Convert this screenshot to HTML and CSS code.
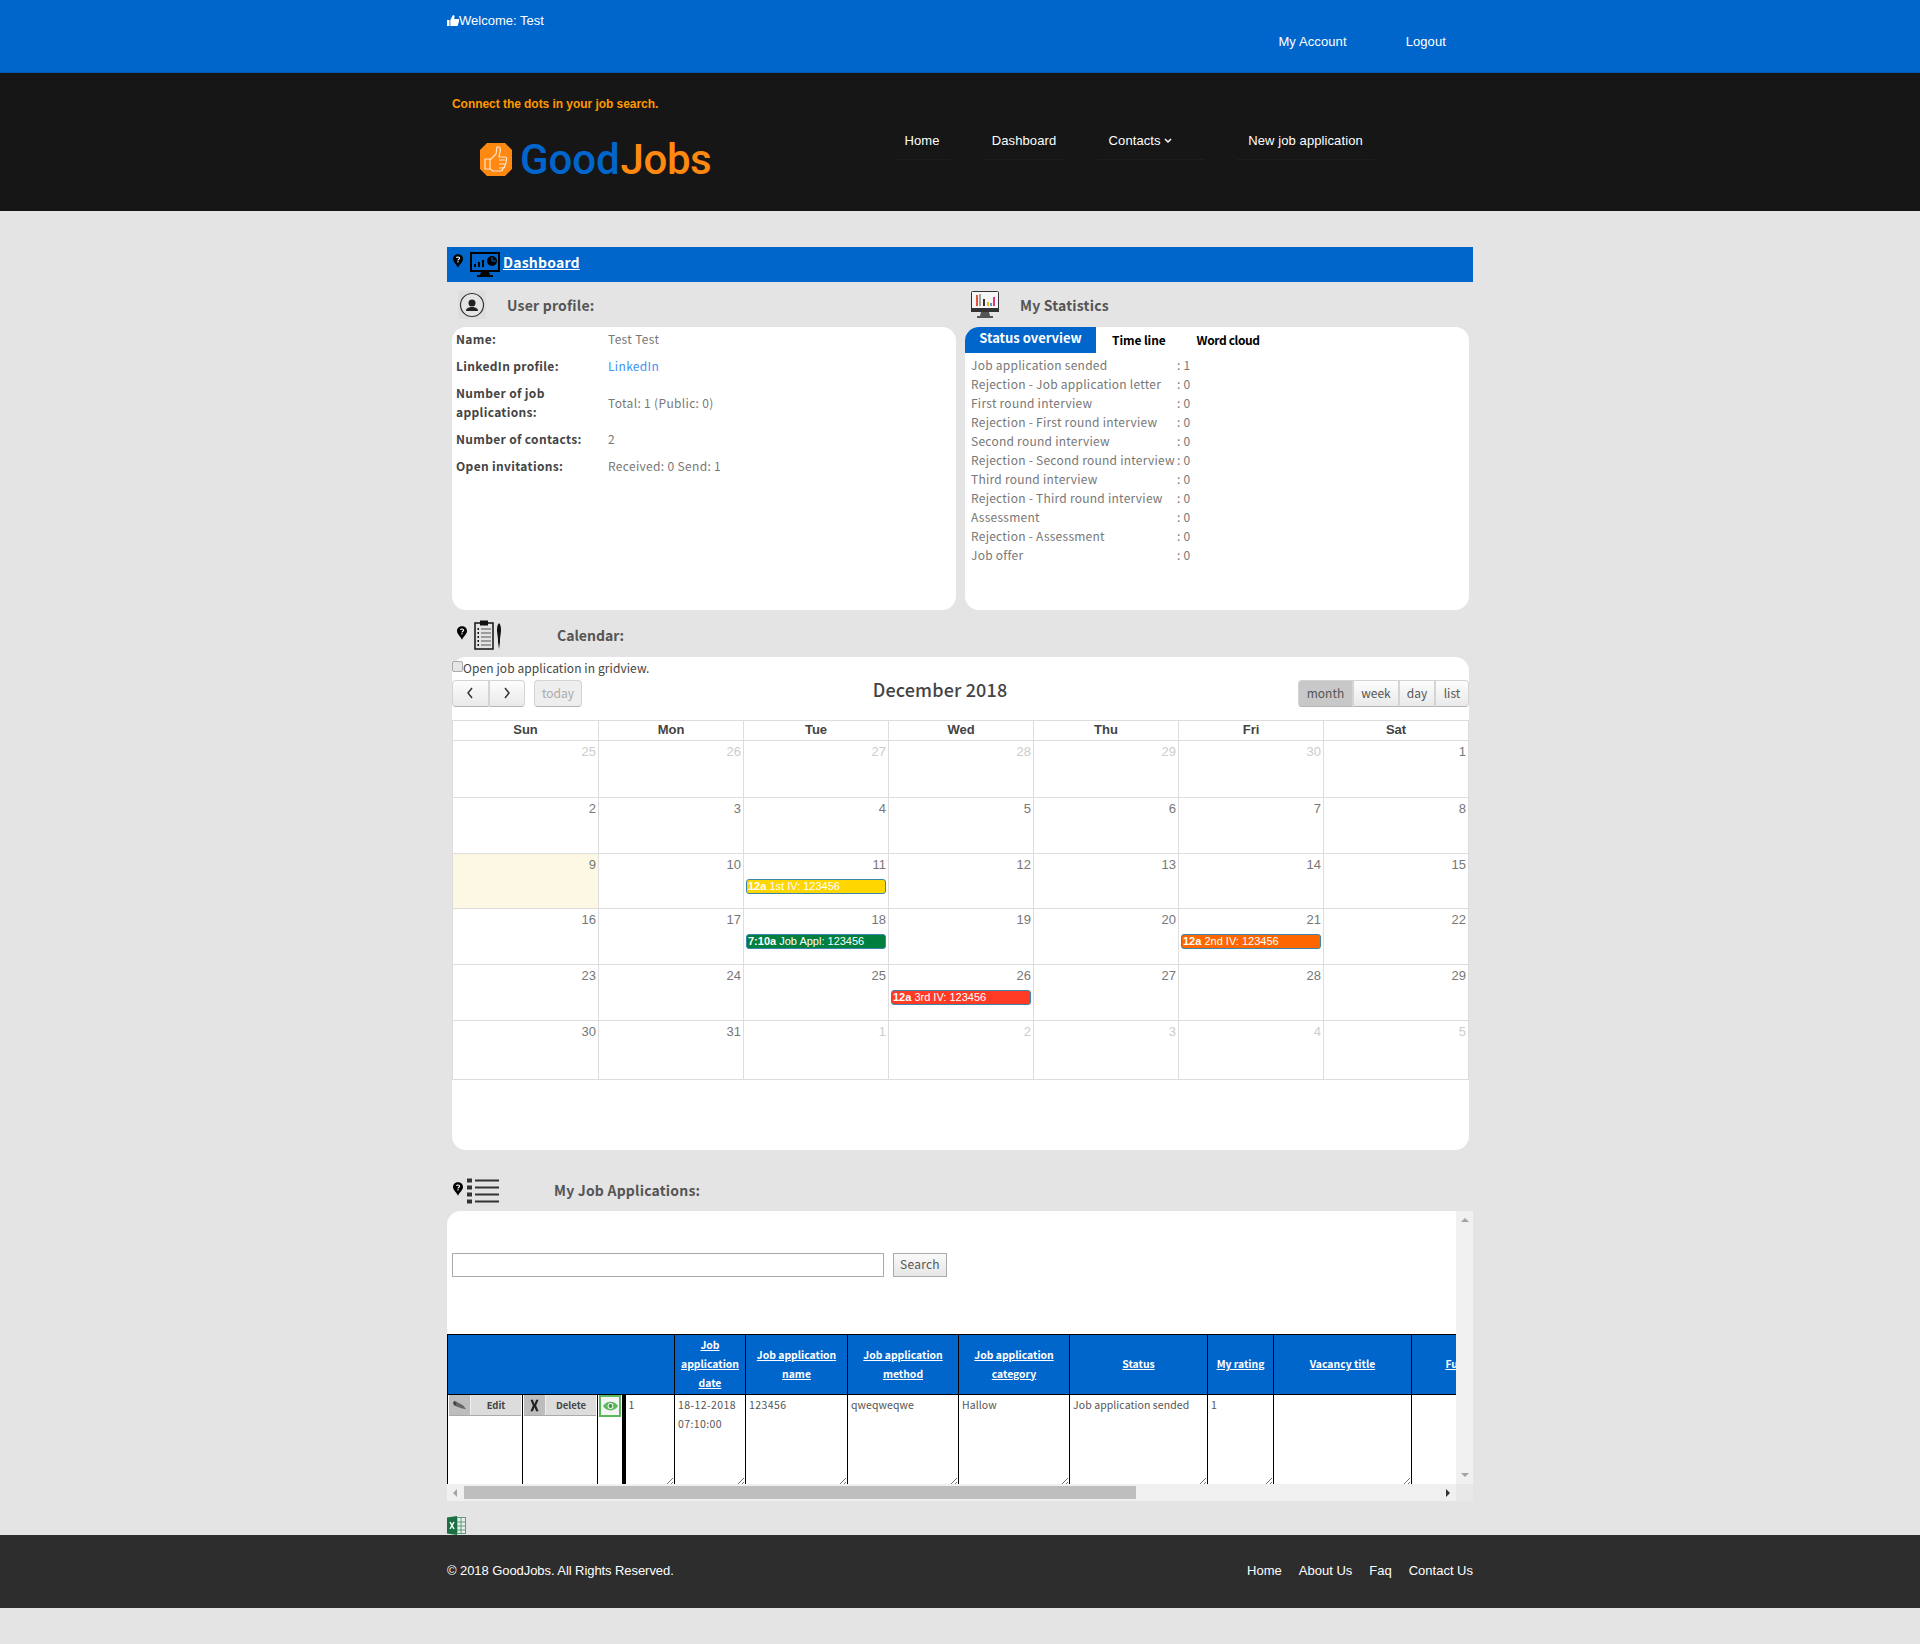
FILE: index.html
```html
<!DOCTYPE html>
<html lang="en">
<head>
<meta charset="utf-8">
<title>GoodJobs</title>
<link rel="stylesheet" href="styles.css">
</head>
<body>
<svg class="defs" width="0" height="0" aria-hidden="true">
  <symbol id="pin" viewBox="0 0 12 16">
    <path d="M6 0C2.6 0 0 2.4 0 5.6 0 9 3.6 11.4 6 16c2.4-4.6 6-7 6-10.4C12 2.4 9.400 0 6 0z" fill="#000"/>
    <path d="M4.200 4.300C4.400 2.700 7.900 2.700 7.900 4.600 7.900 5.900 6 6 6 7.500" fill="none" stroke="#fff" stroke-width="1.300"/>
    <rect x="5.300" y="8.300" width="1.400" height="1.500" fill="#fff"/>
  </symbol>
</svg>
<header class="topbar">
  <div class="wrap topbar-in">
    <div class="welcome">
      <svg class="thumb" viewBox="0 0 12 11"><path d="M0 5h2.500v6H0zM3.300 5L6 0c1.400 0 1.800 1 1.500 2.200L7.100 4H12v2.500L10.600 11H3.300z" fill="#fff"/></svg>
      <span>Welcome: Test</span>
    </div>
    <nav class="account"><a>My Account</a><a>Logout</a></nav>
  </div>
</header>
<div class="brandbar">
  <div class="wrap brand-in">
    <div class="brand">
      <p class="tagline">Connect the dots in your job search.</p>
      <div class="logo">
        <svg class="logo-icon" viewBox="0 0 32 33">
          <path d="M7 0h18l7 7v19l-7 7H7l-7-7V7z" fill="#ff8811"/>
          <path d="M5 16h5v10H5zM10 17l6-6 1-7c3-1 4 2 3 5l-1 5h6c2 0 2 3 1 4 1 2 0 3-1 4 0 2-1 3-2 3 0 2-1 3-3 3h-7l-3-2" fill="none" stroke="#ffe6cf" stroke-width="1.200"/>
          <path d="M19 17h6M19 21h6M19 25h5" stroke="#ffe6cf" stroke-width="1.100"/>
        </svg>
        <span class="logo-good">Good</span><span class="logo-jobs">Jobs</span>
      </div>
    </div>
    <nav class="mainnav">
      <a class="nav-home">Home</a>
      <a class="nav-dash">Dashboard</a>
      <a class="nav-cont">Contacts <svg class="chev" viewBox="0 0 8 6"><path d="M1 1l3 3 3-3" fill="none" stroke="#fff" stroke-width="1.500"/></svg></a>
      <a class="nav-new">New job application</a>
    </nav>
  </div>
</div>
<main class="wrap main">
  <div class="dashbar">
    <svg class="pin pin-dash"><use href="#pin"/></svg>
    <svg class="dash-icon" viewBox="0 0 30 25">
      <path d="M1 1h28v18H1z" fill="#0066cc" stroke="#000" stroke-width="2"/>
      <path d="M11 20h8l1 3h3v2H7v-2h3z" fill="#000"/>
      <path d="M4 15h2v-3H4zM8 15h2v-5H8zM12 15h2V8h-2z" fill="#000"/>
      <circle cx="22" cy="9" r="5" fill="#000"/>
      <path d="M22 5v4h4" stroke="#0066cc" fill="none"/>
    </svg>
    <a class="dash-link">Dashboard</a>
  </div>

  <div class="two">
    <section class="col">
      <div class="head head-profile">
        <svg class="user-icon" viewBox="0 0 28 28">
          <rect width="28" height="28" fill="#dedede"/>
          <circle cx="14" cy="14" r="11.500" fill="#e4e4e4" stroke="#333" stroke-width="1.200"/>
          <circle cx="14" cy="12" r="3.500" fill="#222"/>
          <path d="M8 20c0-3 3-4 6-4s6 1 6 4z" fill="#222"/>
        </svg>
        <h2>User profile:</h2>
      </div>
      <div class="card profile">
        <dl class="prow"><dt>Name:</dt><dd>Test Test</dd></dl>
        <dl class="prow"><dt>LinkedIn profile:</dt><dd><a class="li">LinkedIn</a></dd></dl>
        <dl class="prow"><dt>Number of job applications:</dt><dd>Total: 1 (Public: 0)</dd></dl>
        <dl class="prow"><dt>Number of contacts:</dt><dd>2</dd></dl>
        <dl class="prow"><dt>Open invitations:</dt><dd>Received: 0 Send: 1</dd></dl>
      </div>
    </section>
    <section class="col">
      <div class="head head-stats">
        <svg class="stat-icon" viewBox="0 0 28 28">
          <rect x="0.500" y="0.500" width="27" height="20" rx="1" fill="#f6f6f6" stroke="#333"/>
          <rect y="17" width="28" height="4" fill="#333"/>
          <path d="M10 21h8l1 4h3v2H6v-2h3z" fill="#555"/>
          <path d="M6 4v11" stroke="#e5533d" stroke-width="2"/><path d="M9 3v12" stroke="#888" stroke-width="1.500"/><path d="M13 8v7" stroke="#333" stroke-width="2"/>
          <path d="M17 11v4" stroke="#f5b400" stroke-width="2"/><path d="M20 12v3" stroke="#3aa0d8" stroke-width="2"/><path d="M23 6v9" stroke="#e5337d" stroke-width="2"/>
        </svg>
        <h2>My Statistics</h2>
      </div>
      <div class="card stats">
        <div class="tabs"><a class="tab tab-on">Status overview</a><a class="tab tab-time">Time line</a><a class="tab tab-word">Word cloud</a></div>
        <ul class="statlist">
          <li><span>Job application sended</span><b>: 1</b></li>
          <li><span>Rejection - Job application letter</span><b>: 0</b></li>
          <li><span>First round interview</span><b>: 0</b></li>
          <li><span>Rejection - First round interview</span><b>: 0</b></li>
          <li><span>Second round interview</span><b>: 0</b></li>
          <li><span>Rejection - Second round interview</span><b>: 0</b></li>
          <li><span>Third round interview</span><b>: 0</b></li>
          <li><span>Rejection - Third round interview</span><b>: 0</b></li>
          <li><span>Assessment</span><b>: 0</b></li>
          <li><span>Rejection - Assessment</span><b>: 0</b></li>
          <li><span>Job offer</span><b>: 0</b></li>
        </ul>
      </div>
    </section>
  </div>

  <div class="head head-cal">
    <svg class="pin pin-cal"><use href="#pin"/></svg>
    <svg class="clip-icon" viewBox="0 0 28 30">
      <rect x="1" y="3" width="18" height="26" fill="none" stroke="#111" stroke-width="1.500"/>
      <rect x="6" y="0.500" width="8" height="5" fill="#111"/>
      <path d="M7 9h10M7 13h10M7 17h10M7 21h10M7 25h10" stroke="#555" stroke-width="1.200"/>
      <path d="M3.500 9h1.500M3.500 13h1.500M3.500 17h1.500M3.500 21h1.500M3.500 25h1.500" stroke="#111" stroke-width="2"/>
      <path d="M25 3c2 2 2 5 2 8l-1 8v3l-1 7-1-7v-3l-1-8c0-3 0-6 2-8z" fill="#111"/>
    </svg>
    <h2>Calendar:</h2>
  </div>
  <section class="card calendar">
    <label class="gridview"><input type="checkbox" class="cb"><span>Open job application in gridview.</span></label>
    <div class="toolbar">
      <div class="tool-left">
        <div class="btn-group">
          <button class="fc-btn fc-arrow"><svg viewBox="0 0 8 12"><path d="M6 1L2 6l4 5" fill="none" stroke="#333" stroke-width="1.500"/></svg></button>
          <button class="fc-btn fc-arrow"><svg viewBox="0 0 8 12"><path d="M2 1l4 5-4 5" fill="none" stroke="#333" stroke-width="1.500"/></svg></button>
        </div>
        <button class="fc-btn fc-today">today</button>
      </div>
      <h3 class="cal-title">December 2018</h3>
      <div class="btn-group">
        <button class="fc-btn fc-month">month</button>
        <button class="fc-btn fc-week">week</button>
        <button class="fc-btn fc-day">day</button>
        <button class="fc-btn fc-list">list</button>
      </div>
    </div>
    <div class="cal-grid">
      <div class="dow">Sun</div><div class="dow">Mon</div><div class="dow">Tue</div><div class="dow">Wed</div><div class="dow">Thu</div><div class="dow">Fri</div><div class="dow">Sat</div>
      <div class="day off">25</div><div class="day off">26</div><div class="day off">27</div><div class="day off">28</div><div class="day off">29</div><div class="day off">30</div><div class="day">1</div>
      <div class="day">2</div><div class="day">3</div><div class="day">4</div><div class="day">5</div><div class="day">6</div><div class="day">7</div><div class="day">8</div>
      <div class="day today">9</div><div class="day">10</div><div class="day">11<div class="ev ev-yellow"><b>12a</b> 1st IV: 123456</div></div><div class="day">12</div><div class="day">13</div><div class="day">14</div><div class="day">15</div>
      <div class="day">16</div><div class="day">17</div><div class="day">18<div class="ev ev-green"><b>7:10a</b> Job Appl: 123456</div></div><div class="day">19</div><div class="day">20</div><div class="day">21<div class="ev ev-orange"><b>12a</b> 2nd IV: 123456</div></div><div class="day">22</div>
      <div class="day">23</div><div class="day">24</div><div class="day">25</div><div class="day">26<div class="ev ev-red"><b>12a</b> 3rd IV: 123456</div></div><div class="day">27</div><div class="day">28</div><div class="day">29</div>
      <div class="day">30</div><div class="day">31</div><div class="day off">1</div><div class="day off">2</div><div class="day off">3</div><div class="day off">4</div><div class="day off">5</div>
    </div>
  </section>

  <div class="head head-jobs">
    <svg class="pin pin-jobs"><use href="#pin"/></svg>
    <svg class="list-icon" viewBox="0 0 32 27">
      <path d="M0 1.500h5v4H0zM0 8.500h5v4H0zM0 15.500h5v4H0zM0 22.500h5v4H0z" fill="#333"/>
      <path d="M8 3.500h24M8 10.500h24M8 17.500h24M8 24.500h24" stroke="#333" stroke-width="2.200"/>
    </svg>
    <h2>My Job Applications:</h2>
  </div>
  <section class="jobs">
    <div class="jobs-view">
      <div class="search"><input class="search-input" type="text"><button class="search-btn">Search</button></div>
      <table class="apps">
        <colgroup>
          <col class="c1"><col class="c2"><col class="c3"><col class="c4"><col class="c5"><col class="c6"><col class="c7"><col class="c8"><col class="c9"><col class="c10"><col class="c11"><col class="c12">
        </colgroup>
        <thead>
          <tr>
            <th colspan="4"></th>
            <th><a>Job application date</a></th>
            <th><a>Job application name</a></th>
            <th><a>Job application method</a></th>
            <th><a>Job application category</a></th>
            <th><a>Status</a></th>
            <th><a>My rating</a></th>
            <th><a>Vacancy title</a></th>
            <th><a>Function</a></th>
          </tr>
        </thead>
        <tbody>
          <tr>
            <td class="act"><div class="actbtn"><span class="act-ico"><svg viewBox="0 0 16 12"><path d="M1 3l2-2 9 5 3 4-5-1-8-3z" fill="#666"/><path d="M2 2l2 3" stroke="#333" stroke-width="1.500"/></svg></span><span class="act-txt">Edit</span></div></td>
            <td class="act"><div class="actbtn del"><span class="act-ico"><svg viewBox="0 0 12 16"><path d="M1 1h3l2 5 2-5h3L8 8l3 7H8L6 10l-2 5H1l3-7z" fill="#222"/></svg></span><span class="act-txt">Delete</span></div></td>
            <td class="act"><div class="eye"><svg viewBox="0 0 18 12"><path d="M0 6c4-7 14-7 18 0-4 7-14 7-18 0z" fill="#5cb85c"/><circle cx="9" cy="6" r="3.500" fill="#f5f5f5"/><circle cx="9" cy="6" r="2.300" fill="#3d9a3d"/></svg></div></td>
            <td class="val thick val-num">1</td>
            <td class="val val-num">18-12-2018 07:10:00</td>
            <td class="val val-num">123456</td>
            <td class="val">qweqweqwe</td>
            <td class="val">Hallow</td>
            <td class="val">Job application sended</td>
            <td class="val val-num">1</td>
            <td class="val"></td>
            <td class="val"></td>
          </tr>
        </tbody>
      </table>
    </div>
    <div class="vbar"><svg class="ar" viewBox="0 0 8 6"><path d="M4 1l4 4H0z" fill="#a3a3a3"/></svg><svg class="ar" viewBox="0 0 8 6"><path d="M4 5L0 1h8z" fill="#a3a3a3"/></svg></div>
    <div class="hbar">
      <svg class="ar-h" viewBox="0 0 6 8"><path d="M1 4l4-4v8z" fill="#a3a3a3"/></svg>
      <div class="hthumb"></div>
      <svg class="ar-h ar-end" viewBox="0 0 6 8"><path d="M5 4L1 0v8z" fill="#333"/></svg>
    </div>
    <div class="corner"></div>
  </section>
  <div class="excel">
    <svg class="xl" viewBox="0 0 19 19">
      <rect x="7" y="1.500" width="11.500" height="16" fill="#e7f0ea" stroke="#5c9c78"/>
      <path d="M10 2v15M14 2v15M8 6h10M8 10h10M8 14h10" stroke="#5c9c78"/>
      <path d="M0 1.500L10 0v19L0 17.500z" fill="#1d7044"/>
      <path d="M3 6l4 7M7 6l-4 7" stroke="#fff" stroke-width="1.400"/>
    </svg>
  </div>
</main>
<footer class="footer">
  <div class="wrap footer-in">
    <span>© 2018 GoodJobs. All Rights Reserved.</span>
    <nav class="footnav"><a>Home</a><a>About Us</a><a>Faq</a><a>Contact Us</a></nav>
  </div>
</footer>
</body>
</html>
```

FILE: styles.css
```css
* { box-sizing: border-box; }
html, body { margin: 0; padding: 0; }
body {
  background: #e4e4e4;
  font-family: "Noto Sans CJK JP", "Noto Sans", sans-serif;
  font-size: 12px;
  color: #666;
  min-height: 1644px;
}
.defs { display: block; height: 0; }
.wrap { width: 1026px; margin: 0 auto; }
a { color: inherit; }
p, h2, h3, dl, dd, ul { margin: 0; padding: 0; }

.topbar { background: #0066cc; height: 73px; border-bottom: 1px solid #0059b3; color: #fff; }
.topbar-in { display: flex; justify-content: space-between; height: 72px; }
.welcome { display: flex; align-items: center; height: 40px; font-size: 13px; font-family: "Liberation Sans", sans-serif; }
.thumb { width: 12px; height: 11px; }
.account { display: flex; gap: 59px; padding: 33px 27px 0 0; font-size: 13px; line-height: 18px; letter-spacing: 0.1px; font-family: "Liberation Sans", sans-serif; }

.brandbar { background: #161616; height: 138px; }
.brand-in { display: flex; }
.brand { width: 447px; padding: 23px 0 0 5px; }
.tagline { color: #ff9900; font-size: 12px; line-height: 16px; font-weight: 700; letter-spacing: -0.05px; font-family: "Liberation Sans", sans-serif; }
.logo { display: flex; align-items: center; height: 36px; margin-top: 29px; padding-left: 28px; font-family: Roboto, sans-serif; font-size: 42px; font-weight: 500; letter-spacing: -0.1px; }
.logo-icon { width: 32px; height: 33px; margin-right: 8px; }
.logo-good { color: #0066cc; margin-right: 1px; }
.logo-jobs { color: #ff8811; letter-spacing: -0.4px; }

.mainnav { display: flex; gap: 32px; padding-top: 59px; color: #fff; font-family: "Liberation Sans", sans-serif; font-size: 13px; letter-spacing: 0.1px; }
.mainnav a { display: block; height: 28px; line-height: 18px; text-align: center; border-bottom: 1px solid #1d1d1d; }
.nav-home { width: 56px; }
.nav-dash { width: 84px; }
.nav-cont { width: 107px; padding-right: 22px; }
.nav-new { width: 137px; }
.chev { width: 8px; height: 6px; vertical-align: 1px; }

.main { padding-top: 36px; }
.dashbar { display: flex; align-items: center; height: 35px; background: #0066cc; padding-left: 6px; }
.pin { width: 10px; height: 14px; }
.pin-dash { margin: -7px 7px 0 0; }
.dash-icon { width: 30px; height: 25px; margin-right: 3px; }
.dash-link { color: #fff; font-size: 14px; font-weight: 700; letter-spacing: 0.2px; text-decoration: underline; padding-bottom: 5px; font-family: "Noto Sans CJK JP", sans-serif; }

.two { display: flex; gap: 9px; padding-left: 5px; }
.col { width: 504px; }
.head { display: flex; align-items: center; }
.head h2 { font-size: 14px; font-weight: 700; color: #555; letter-spacing: 0.2px; }
.head-profile { height: 45px; padding-left: 6px; }
.user-icon { width: 28px; height: 28px; margin-right: 21px; }
.head-stats { height: 45px; padding-left: 6px; }
.stat-icon { width: 28px; height: 28px; margin-right: 21px; }

.card { background: #fff; border-radius: 14px; }
.profile { height: 283px; padding: 2px 4px 0; letter-spacing: 0.33px; }
.prow { display: flex; align-items: center; line-height: 19px; margin-bottom: 8px; }
.prow dt { width: 152px; padding-right: 16px; font-weight: 700; color: #444; }
.prow dd { color: #777; }
.li { color: #3d94f6; }

.stats { height: 283px; }
.tabs { display: flex; height: 26px; }
.tab { display: block; font-weight: 700; color: #000; line-height: 25px; }
.tab-on { width: 131px; height: 26px; line-height: 22px; background: #0066cc; color: #fff; text-align: center; font-size: 13px; border-radius: 14px 0 0 0; }
.tab-time { margin-left: 16px; letter-spacing: -0.1px; }
.tab-word { margin-left: 31px; letter-spacing: -0.4px; }
.statlist { list-style: none; padding: 2px 0 0 6px; letter-spacing: 0.25px; }
.statlist li { display: flex; height: 19px; line-height: 19px; color: #777; }
.statlist span { width: 206px; white-space: nowrap; }
.statlist b { font-weight: 400; }

.head-cal { height: 47px; padding: 3px 0 0 10px; }
.head-cal h2 { letter-spacing: 0; }
.pin-cal { margin: -4px 6px 0 0; }
.clip-icon { width: 30px; height: 30px; margin-right: 54px; }
.calendar { margin-left: 5px; width: 1017px; height: 493px; }
.gridview { display: flex; align-items: center; height: 20px; color: #444; padding-top: 1px; letter-spacing: 0.08px; }
.cb { appearance: none; width: 11px; height: 11px; margin: -3px 0 0 0; border: 1px solid #aaa; border-radius: 2px; background: #e6e6e6; }
.toolbar { display: flex; justify-content: space-between; align-items: flex-start; height: 40px; margin-top: 3px; }
.tool-left { display: flex; gap: 9px; }
.btn-group { display: flex; }
.fc-btn {
  height: 27px;
  padding: 0 0 2px;
  border: 1px solid #d4d4d4;
  border-bottom-color: #b5b5b5;
  background: linear-gradient(#fdfdfd, #e9e9e9);
  color: #555;
  font-family: "Noto Sans CJK JP", sans-serif;
  font-size: 12px;
  border-radius: 0;
}
.fc-arrow { width: 36.500px; }
.fc-arrow svg { width: 8px; height: 12px; display: block; margin: 0 auto; }
.btn-group .fc-btn:first-child { border-radius: 4px 0 0 4px; }
.btn-group .fc-btn:last-child { border-radius: 0 4px 4px 0; }
.fc-today { width: 48px; border-radius: 4px; color: #aaa; background: #eee; }
.fc-month { width: 55px; background: #c8c8c8; }
.fc-week { width: 46px; }
.fc-day { width: 36px; }
.fc-list { width: 34px; }
.cal-title { font-size: 18px; line-height: 24px; font-weight: 500; color: #444; margin-top: -3px; letter-spacing: 0.15px; }

.cal-grid {
  display: grid;
  grid-template-columns: 146px repeat(6, 145px);
  grid-template-rows: 20px 57px 56px 55px 56px 56px 59px;
  width: 1017px;
  border-top: 1px solid #ddd;
  border-left: 1px solid #ddd;
}
.dow { border-right: 1px solid #ddd; border-bottom: 1px solid #ddd; text-align: center; font-weight: 700; font-size: 13px; line-height: 17px; color: #444; font-family: "Liberation Sans", sans-serif; }
.day { border-right: 1px solid #ddd; border-bottom: 1px solid #ddd; text-align: right; padding: 2px 2px 0; font-size: 13px; line-height: 18px; color: #777; font-family: "Liberation Sans", sans-serif; }
.off { color: #ccc; }
.today { background: #fcf8e3; }
.ev { height: 15px; margin: 5px 0 0; padding-left: 1px; border: 1px solid #3a87ad; border-radius: 3px; color: #fff; font-size: 11px; line-height: 13px; text-align: left; }
.ev-yellow { background: #ffd700; }
.ev-green { background: #007f3f; }
.ev-orange { background: #ff6600; }
.ev-red { background: #ff3b26; }

.head-jobs { height: 61px; padding: 19px 0 0 6px; }
.pin-jobs { margin: -3px 4px 0 0; }
.list-icon { width: 32px; height: 27px; margin-right: 55px; }
.jobs {
  display: grid;
  grid-template-columns: 1009px 17px;
  grid-template-rows: 273px 17px;
  height: 290px;
  background: #fff;
  border-radius: 14px 0 0 0;
}
.jobs-view { overflow: hidden; border-radius: 14px 0 0 0; }
.search { display: flex; gap: 9px; height: 123px; padding: 42px 0 0 5px; }
.search-input { width: 432px; height: 24px; border: 1px solid #aaa; background: #fff; }
.search-btn { width: 54px; height: 24px; padding: 0 0 3px; border: 1px solid #aaa; background: linear-gradient(#fafafa, #e6e6e6); color: #555; font-family: inherit; font-size: 12px; letter-spacing: 0.25px; }

.apps { table-layout: fixed; width: 1077px; border-collapse: collapse; border: 1px solid #000; }
.c1, .c2 { width: 75px; }
.c3 { width: 26px; }
.c4 { width: 51px; }
.c5 { width: 71px; }
.c6 { width: 102px; }
.c7 { width: 111px; }
.c8 { width: 111px; }
.c9 { width: 138px; }
.c10 { width: 66px; }
.c11 { width: 138px; }
.c12 { width: 113px; }
.apps th { height: 58px; padding: 0 2px 2px; border: 1px solid #000; background: #0066cc; color: #fff; font-size: 10.400px; line-height: 19px; font-weight: 700; vertical-align: middle; }
.apps th a { text-decoration: underline; }
.apps td { height: 91px; padding: 0; border: 1px solid #000; vertical-align: top; position: relative; }
.val { padding: 0 3px !important; font-size: 10.500px; line-height: 19px; color: #555; letter-spacing: 0.08px; }
.val-num { letter-spacing: 0.4px; }
.val::after {
  content: "";
  position: absolute;
  right: 1px;
  bottom: 1px;
  width: 9px;
  height: 9px;
  background: repeating-linear-gradient(135deg, transparent 0 2px, #777 2px 3px);
  clip-path: polygon(100% 0, 100% 100%, 0 100%);
}
.thick { border-left: 4px solid #000 !important; }
.actbtn { display: flex; width: 72px; height: 21px; margin: 0 0 0 1px; border-bottom: 1px solid #aaa; font-size: 9.500px; font-weight: 700; color: #444; line-height: 20px; }
.act-ico { display: flex; align-items: center; justify-content: center; width: 21px; background: #bdbdbd; }
.act-ico svg { width: 15px; height: 13px; }
.act-txt { flex: 1; background: #dcdcdc; text-align: center; border-left: 1px solid #eee; }
.eye { display: flex; align-items: center; justify-content: center; width: 22px; height: 22px; margin-left: 1px; border: 2px solid #5cb85c; background: #f5f5f5; }
.eye svg { width: 15px; height: 10px; }

.vbar { grid-column: 2; grid-row: 1; background: #f0f0f0; display: flex; flex-direction: column; justify-content: space-between; align-items: center; padding: 6px 0; }
.ar { width: 8px; height: 6px; }
.hbar { grid-column: 1; grid-row: 2; background: #f0f0f0; display: flex; align-items: center; padding: 0 5px; }
.ar-h { width: 6px; height: 8px; }
.ar-end { margin-left: auto; }
.hthumb { width: 672px; height: 13px; margin-left: 6px; background: #bebebe; }
.corner { grid-column: 2; grid-row: 2; background: #e8e8e8; }

.excel { height: 34px; padding-top: 15px; }
.xl { width: 19px; height: 19px; display: block; }

.footer { background: #2d2d2d; height: 73px; color: #fff; font-size: 13px; font-family: "Liberation Sans", sans-serif; }
.footer-in { display: flex; justify-content: space-between; align-items: center; height: 73px; padding-bottom: 2px; }
.footer-in > span { letter-spacing: -0.07px; }
.footnav { display: flex; gap: 17px; }
```
